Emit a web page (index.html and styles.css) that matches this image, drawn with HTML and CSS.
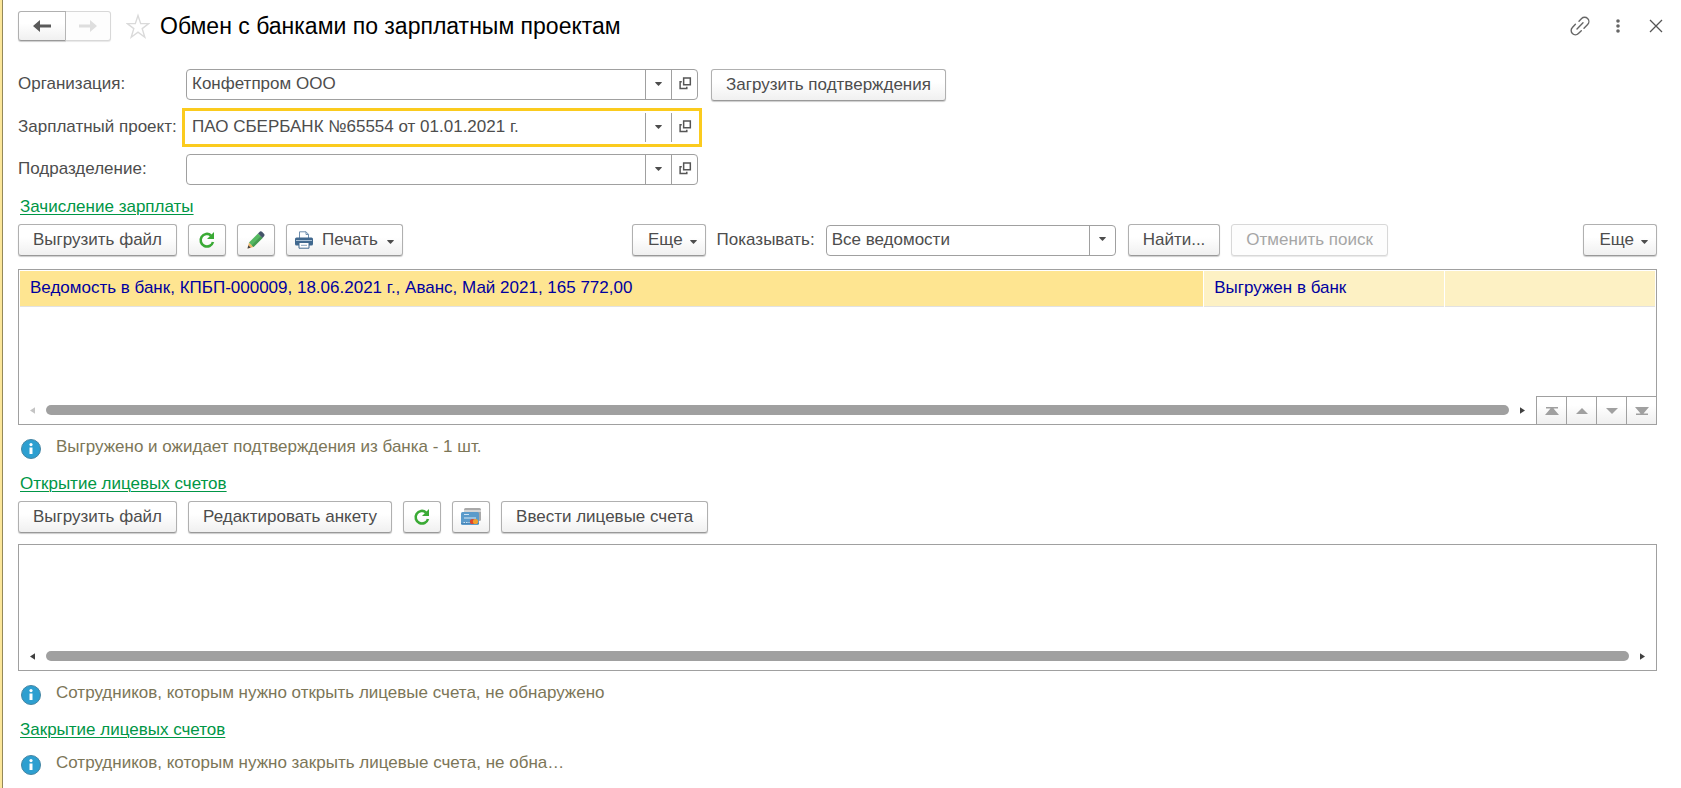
FILE: index.html
```html
<!DOCTYPE html>
<html lang="ru">
<head>
<meta charset="utf-8">
<title>Обмен с банками по зарплатным проектам</title>
<link rel="stylesheet" href="styles.css">
</head>
<body>
<svg class="defs" aria-hidden="true">
  <symbol id="i-down" viewBox="0 0 8 5"><path d="M0 0h8v1L4 5 0 1z" fill="#4d4d4d"/></symbol>
  <symbol id="i-open" viewBox="0 0 14 14"><path d="M5 1.2h7.2v7.2H5zM3 5.2H1.2v7.2h7.2v-2" fill="none" stroke="#555" stroke-width="1.6"/></symbol>
  <symbol id="i-refresh" viewBox="0 0 18 18"><path d="M13 4.400A6.300 6.300 0 1 0 15 11" fill="none" stroke="#3aaa35" stroke-width="2.600"/><path d="M16 1v7H9z" fill="#3aaa35"/></symbol>
  <symbol id="i-info" viewBox="0 0 20 20"><circle cx="10" cy="10" r="9.5" fill="#2d9fd0" stroke="#4585a3"/><circle cx="10" cy="5.600" r="1.600" fill="#fff"/><path d="M8.500 8.500h3V15h-3z" fill="#fff"/></symbol>
  <symbol id="i-left" viewBox="0 0 6 8"><path d="M6 0v8L0 4z" fill="currentColor"/></symbol>
  <symbol id="i-right" viewBox="0 0 6 8"><path d="M0 0v8l6-4z" fill="currentColor"/></symbol>
</svg>
<main class="page">
  <header class="head">
    <div class="history">
      <button class="btn back" aria-label="Назад"><svg width="18" height="12" viewBox="0 0 18 12"><path d="M0 6l7-6v4.500h11v3H7V12z" fill="#5a5a5a"/></svg></button>
      <button class="btn forward" aria-label="Вперед" disabled><svg width="18" height="12" viewBox="0 0 18 12"><path d="M18 6l-7-6v4.500H0v3h11V12z" fill="#dedede"/></svg></button>
    </div>
    <button class="plain star" aria-label="В избранное"><svg width="24" height="26" viewBox="0 0 24 26"><path d="M12 2.500l2.700 8.100h8.100l-6.600 5 2.600 8.600L12 19.200l-6.800 5 2.600-8.600-6.600-5h8.100z" fill="#fff" stroke="#dadada" stroke-width="1.400"/></svg></button>
    <h1 class="title">Обмен с банками по зарплатным проектам</h1>
    <div class="window-tools">
      <button class="plain" aria-label="Ссылка"><svg width="20" height="20" viewBox="0 0 20 20"><g fill="none" stroke="#666" stroke-width="1.400" stroke-linecap="round"><path d="M9 5.200l2.600-2.700a4.100 4.100 0 0 1 6 6L14 12.200M5.400 8.300L2.400 11.500a4.100 4.100 0 0 0 6 6L11.300 14.700M7 13l6-6.200"/></g></svg></button>
      <button class="plain" aria-label="Меню"><svg width="20" height="20" viewBox="0 0 20 20" fill="#666"><circle cx="10" cy="5" r="1.800"/><circle cx="10" cy="10" r="1.800"/><circle cx="10" cy="15" r="1.800"/></svg></button>
      <button class="plain" aria-label="Закрыть"><svg width="20" height="20" viewBox="0 0 20 20"><path d="M4 4l12 12M16 4L4 16" stroke="#555" stroke-width="1.300"/></svg></button>
    </div>
  </header>

  <form class="form">
    <label class="label" for="org">Организация:</label>
    <div class="row">
      <div class="field"><input id="org" value="Конфетпром ООО"><button type="button" aria-label="Выбрать"><svg width="7" height="4"><use href="#i-down"/></svg></button><button type="button" class="open" aria-label="Открыть"><svg width="13" height="13"><use href="#i-open"/></svg></button></div>
      <button type="button" class="btn">Загрузить подтверждения</button>
    </div>
    <label class="label" for="project">Зарплатный проект:</label>
    <div class="row">
      <div class="field active"><input id="project" value="ПАО СБЕРБАНК №65554 от 01.01.2021 г."><button type="button" aria-label="Выбрать"><svg width="7" height="4"><use href="#i-down"/></svg></button><button type="button" class="open" aria-label="Открыть"><svg width="13" height="13"><use href="#i-open"/></svg></button></div>
    </div>
    <label class="label" for="dept">Подразделение:</label>
    <div class="row">
      <div class="field"><input id="dept" value=""><button type="button" aria-label="Выбрать"><svg width="7" height="4"><use href="#i-down"/></svg></button><button type="button" class="open" aria-label="Открыть"><svg width="13" height="13"><use href="#i-open"/></svg></button></div>
    </div>
  </form>

  <section class="section">
    <a class="link" href="#">Зачисление зарплаты</a>
    <div class="toolbar">
      <div class="group actions">
        <button class="btn">Выгрузить файл</button>
        <button class="btn icon" aria-label="Обновить"><svg width="18" height="18"><use href="#i-refresh"/></svg></button>
        <button class="btn icon" aria-label="Изменить"><svg width="18" height="18" viewBox="0 0 18 18"><path d="M.5 17.500L2 11.500l4.500 4.500z" fill="#efb468"/><path d="M.5 17.500l.8-3.200 2.400 2.400z" fill="#444"/><path d="M2 11.500L11 2.500l4.500 4.500-9 9z" fill="#55b961"/><path d="M4.800 14.300l9-9L15.500 7l-9 9z" fill="#459c52"/><path d="M11 2.500L13 .5q1-.6 2 .2l2.200 2.200q.6 1 0 2L15.500 7z" fill="#44546a"/></svg></button>
        <button class="btn print"><svg width="18" height="18" viewBox="0 0 18 18"><path d="M4.500 8V.8h6.500l2.500 2.500V8" fill="#fff" stroke="#6f8fae"/><path d="M11 .8v2.700h2.500" fill="none" stroke="#6f8fae"/><rect y="6.500" width="18" height="8" rx="1.500" fill="#41698f"/><path d="M1 9.500h16" stroke="#a9c0d5"/><path d="M4 11.500h10v5.700H4z" fill="#fff" stroke="#41698f"/><path d="M6 14.300h6" stroke="#8aa5bf"/></svg>Печать<svg class="caret" width="7" height="4"><use href="#i-down"/></svg></button>
      </div>
      <div class="group filter">
        <button class="btn more">Еще<svg class="caret" width="7" height="4"><use href="#i-down"/></svg></button>
        <label for="show">Показывать:</label>
        <div class="field select"><select id="show"><option>Все ведомости</option></select><span class="drop"><svg width="7" height="4"><use href="#i-down"/></svg></span></div>
        <button class="btn">Найти...</button>
        <button class="btn" disabled>Отменить поиск</button>
      </div>
      <button class="btn more last">Еще<svg class="caret" width="7" height="4"><use href="#i-down"/></svg></button>
    </div>
    <div class="list">
      <table class="grid">
        <colgroup><col class="c1"><col class="c2"><col></colgroup>
        <tbody><tr><td class="current">Ведомость в банк, КПБП-000009, 18.06.2021 г., Аванс, Май 2021, 165 772,00</td><td>Выгружен в банк</td><td></td></tr></tbody>
      </table>
      <div class="foot">
        <div class="scroll"><svg class="off" width="5" height="7"><use href="#i-left"/></svg><span class="thumb"></span><svg width="5" height="7"><use href="#i-right"/></svg></div>
        <div class="nav">
          <button aria-label="В начало"><svg width="14" height="8" viewBox="0 0 14 8"><path d="M1 0h12v1.500H8.500L14 8H0l5.500-6.500H1z" fill="#a0a0a0"/></svg></button>
          <button aria-label="Вверх"><svg width="12" height="6" viewBox="0 0 12 6"><path d="M6 0l6 6H0z" fill="#a0a0a0"/></svg></button>
          <button aria-label="Вниз"><svg width="12" height="6" viewBox="0 0 12 6"><path d="M6 6l6-6H0z" fill="#a0a0a0"/></svg></button>
          <button aria-label="В конец"><svg width="14" height="8" viewBox="0 0 14 8"><path d="M1 8h12V6.500H8.500L14 0H0l5.500 6.500H1z" fill="#a0a0a0"/></svg></button>
        </div>
      </div>
    </div>
    <p class="info"><svg width="20" height="20"><use href="#i-info"/></svg><span>Выгружено и ожидает подтверждения из банка - 1 шт.</span></p>
  </section>

  <section class="section">
    <a class="link" href="#">Открытие лицевых счетов</a>
    <div class="toolbar">
      <div class="group">
        <button class="btn">Выгрузить файл</button>
        <button class="btn">Редактировать анкету</button>
        <button class="btn icon" aria-label="Обновить"><svg width="18" height="18"><use href="#i-refresh"/></svg></button>
        <button class="btn icon" aria-label="Карты"><svg width="20" height="18" viewBox="0 0 20 18"><rect x="3" y="0" width="17" height="13" rx="1.500" fill="#a9a9a9"/><path d="M3 3h17" stroke="#d5d5d5" stroke-width="2"/><rect y="4" width="18" height="13" rx="1.500" fill="#5b9bcb"/><path d="M0 15.500h18" stroke="#4a86b8"/><path d="M3 6.500h5" stroke="#cfe3f3"/><path d="M3 10h12" stroke="#b5d3ea" stroke-width="1.400"/><path d="M2.500 14.500h6" stroke="#cfe3f3" stroke-dasharray="1.500 1"/><circle cx="11.500" cy="13.500" r="2.600" fill="#e0452c"/><circle cx="14.500" cy="13.500" r="2.600" fill="#f0a02c"/></svg></button>
        <button class="btn">Ввести лицевые счета</button>
      </div>
    </div>
    <div class="list short">
      <div class="foot">
        <div class="scroll"><svg width="5" height="7"><use href="#i-left"/></svg><span class="thumb"></span><svg width="5" height="7"><use href="#i-right"/></svg></div>
      </div>
    </div>
    <p class="info"><svg width="20" height="20"><use href="#i-info"/></svg><span>Сотрудников, которым нужно открыть лицевые счета, не обнаружено</span></p>
  </section>

  <section class="section">
    <a class="link" href="#">Закрытие лицевых счетов</a>
    <p class="info closing"><svg width="20" height="20"><use href="#i-info"/></svg><span>Сотрудников, которым нужно закрыть лицевые счета, не обна…</span></p>
  </section>
</main>
</body>
</html>
```
FILE: styles.css
```css
* { box-sizing: border-box; }
body {
  margin: 0;
  background: #fff;
  color: #4d4d4d;
  font: 17px/20px "Liberation Sans", Arial, sans-serif;
}
button, input, select { font: inherit; color: inherit; margin: 0; }
.defs { display: none; }
svg { display: block; flex: none; }

.page {
  min-height: 100vh;
  padding: 11px 24px 0 15px;
  border-left: 1px solid #948859;
  margin-left: 2px;
  box-shadow: -2px 0 0 #fbe69a;
}

.btn {
  display: flex;
  align-items: center;
  justify-content: center;
  height: 32px;
  padding: 0 14px;
  border: 1px solid #b0b0b0;
  border-bottom-color: #999;
  border-radius: 3px;
  background: linear-gradient(#fff 40%, #f0f0f0);
  box-shadow: 0 1px 1px #ccc;
  white-space: nowrap;
}
.btn:disabled { color: #a6a6a6; border-color: #d8d8d8; box-shadow: 0 1px 1px #e8e8e8; background: #fdfdfd; }
.btn.icon { width: 38px; padding: 0; }
.plain { padding: 0; border: 0; background: none; }

.head { display: flex; align-items: center; height: 30px; }
.history { display: flex; }
.history .btn { height: 30px; padding: 0; }
.back { width: 48px; border-radius: 3px 0 0 3px; }
.forward { width: 45px; border-left: 0; border-radius: 0 3px 3px 0; }
.star { margin-left: 15px; }
.title { margin: 0 0 0 10px; font-size: 23px; line-height: 28px; font-weight: 400; color: #000; }
.window-tools { display: flex; gap: 18px; margin-left: auto; margin-right: -9px; }

.form {
  display: grid;
  grid-template-columns: 168px 1fr;
  row-gap: 11px;
  margin-top: 28px;
}
.label { line-height: 30px; white-space: nowrap; }
.row { display: flex; align-items: flex-start; gap: 13px; }
.field {
  display: flex;
  width: 512px;
  height: 31px;
  border: 1px solid #a0a0a0;
  border-radius: 4px;
  background: #fff;
}
.field input, .field select {
  flex: 1;
  min-width: 0;
  padding: 0 5px 1px;
  border: 0;
  outline: 0;
  background: none;
  appearance: none;
}
.field button, .drop {
  display: flex;
  align-items: center;
  justify-content: center;
  width: 26px;
  padding: 0 0 2px;
  border: 0;
  border-left: 1px solid #a0a0a0;
  background: none;
}
.field .open { padding-left: 2px; }
.field.active { border-color: transparent; border-radius: 0; outline: 3px solid #fbcb1e; outline-offset: 1px; }

.section { display: flex; flex-direction: column; }
.link { align-self: flex-start; margin: 12px 0 7px 2px; color: #009646; text-underline-offset: 2px; text-decoration-thickness: 1px; }
.section + .section .link { margin-top: 15px; }
.toolbar { display: flex; align-items: flex-start; }
.group { display: flex; align-items: center; gap: 11px; }
.actions { flex: 0 1 614px; }
.print { padding: 0 8px; gap: 9px; }
.caret { margin-top: 4px; }
.more { gap: 7px; padding: 0 8px 0 15px; }
.select { position: relative; width: 290px; margin-right: 1px; }
.drop { position: absolute; top: 0; right: 0; bottom: 0; pointer-events: none; }
.last { margin-left: auto; }

.list {
  display: flex;
  flex-direction: column;
  height: 156px;
  margin-top: 13px;
  padding: 1px 0 0;
  border: 1px solid #a0a0a0;
}
.list.short { height: 127px; margin-top: 11px; }
.grid { width: calc(100% - 2px); margin: 0 1px; border-collapse: collapse; table-layout: fixed; border-bottom: 1px solid #e2e2e2; }
.c1 { width: 72.4%; }
.c2 { width: 14.7%; }
.grid td {
  height: 35px;
  padding: 0 10px;
  border-right: 1px solid #fff;
  background: #fdf1c4;
  background-clip: padding-box;
  color: #0000a0;
}
.grid td:last-child { border-right: 0; }
.grid .current { background: #fee591; }
.foot { display: flex; margin-top: auto; }
.scroll { flex: 1; display: flex; align-items: center; height: 28px; padding: 0 11px; gap: 11px; color: #404040; }
.off { color: #c4c4c4; }
.thumb { flex: 1; height: 10px; border-radius: 5px; background: #a0a0a0; }
.nav { display: flex; border-top: 1px solid #a0a0a0; }
.nav button {
  display: flex;
  align-items: center;
  justify-content: center;
  width: 30px;
  height: 27px;
  padding: 0;
  border: 0;
  border-left: 1px solid #a0a0a0;
  background: linear-gradient(#fff 30%, #efefef);
}
.info { display: flex; gap: 15px; margin: 12px 0 0 3px; color: #7c7658; }
.info svg { margin-top: 2px; }
.closing { margin-top: 6px; }
```
